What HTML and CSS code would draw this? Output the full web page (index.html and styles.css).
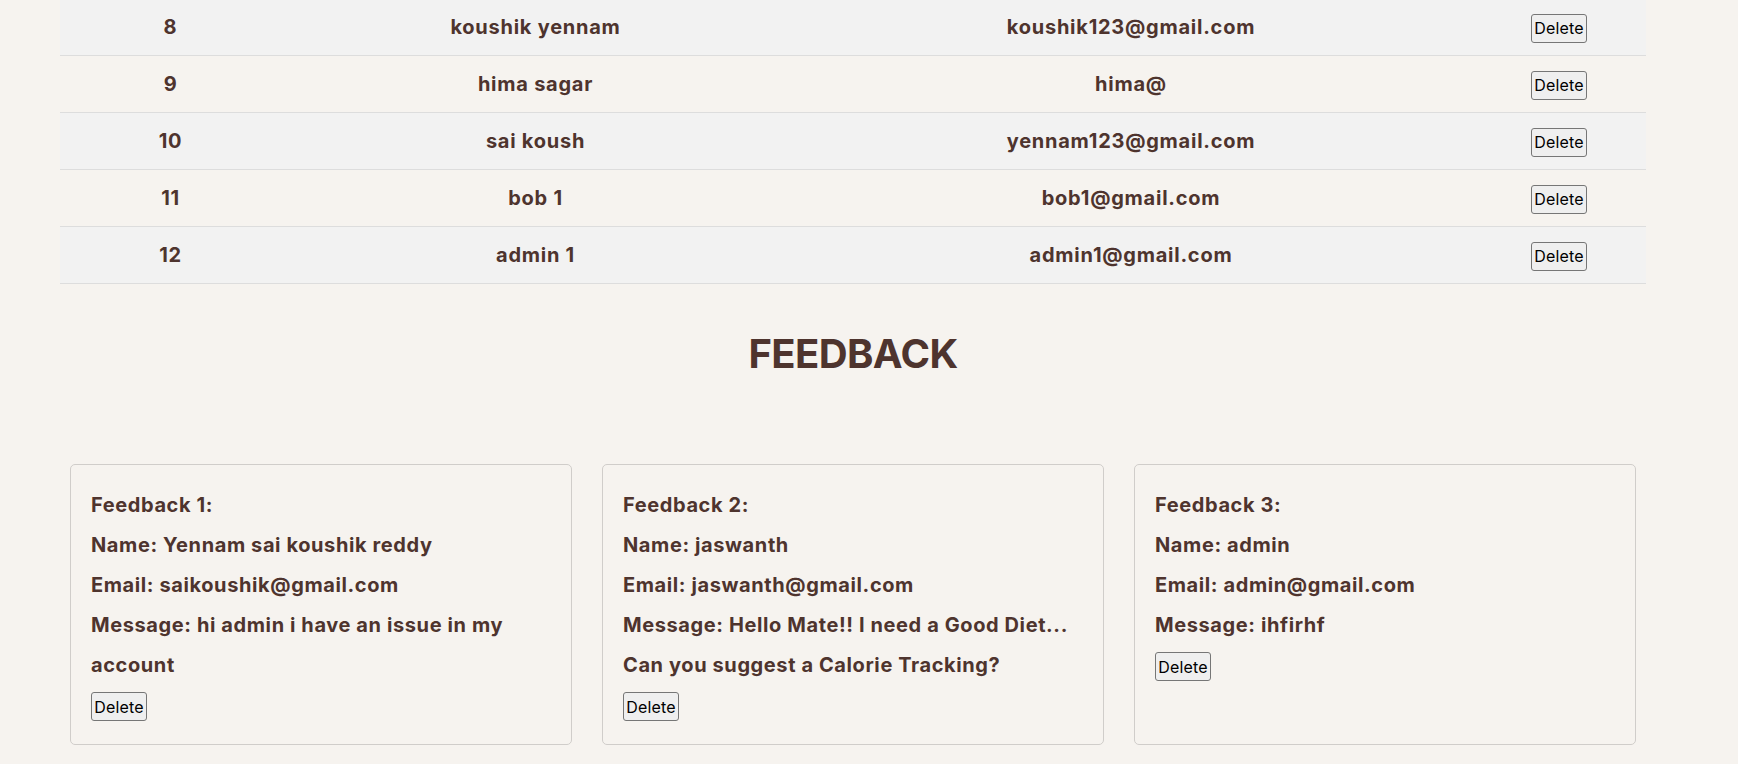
FILE: index.html
```html
<!DOCTYPE html>
<html lang="en">
<head>
<meta charset="utf-8">
<title>Admin - Users and Feedback</title>
<link rel="stylesheet" href="styles.css">
</head>
<body>
<main class="page">
  <table class="users">
    <colgroup>
      <col class="col-id">
      <col class="col-name">
      <col class="col-email">
      <col class="col-action">
    </colgroup>
    <tbody>
      <tr class="row-alt"><td>8</td><td>koushik yennam</td><td>koushik123@gmail.com</td><td><button class="btn">Delete</button></td></tr>
      <tr><td>9</td><td>hima sagar</td><td>hima@</td><td><button class="btn">Delete</button></td></tr>
      <tr class="row-alt"><td>10</td><td>sai koush</td><td>yennam123@gmail.com</td><td><button class="btn">Delete</button></td></tr>
      <tr><td>11</td><td>bob 1</td><td>bob1@gmail.com</td><td><button class="btn">Delete</button></td></tr>
      <tr class="row-alt"><td>12</td><td>admin 1</td><td>admin1@gmail.com</td><td><button class="btn">Delete</button></td></tr>
    </tbody>
  </table>

  <h2 class="section-title">FEEDBACK</h2>

  <section class="feedback-grid">
    <div class="card">
      <p>Feedback 1:</p>
      <p>Name: Yennam sai koushik reddy</p>
      <p>Email: saikoushik@gmail.com</p>
      <p>Message: hi admin i have an issue in my account</p>
      <button class="btn btn-card">Delete</button>
    </div>
    <div class="card">
      <p>Feedback 2:</p>
      <p>Name: jaswanth</p>
      <p>Email: jaswanth@gmail.com</p>
      <p>Message: Hello Mate!! I need a Good Diet... Can you suggest a Calorie Tracking?</p>
      <button class="btn btn-card">Delete</button>
    </div>
    <div class="card">
      <p>Feedback 3:</p>
      <p>Name: admin</p>
      <p>Email: admin@gmail.com</p>
      <p>Message: ihfirhf</p>
      <button class="btn btn-card">Delete</button>
    </div>
  </section>
</main>
</body>
</html>
```

FILE: styles.css
```css
html, body {
  margin: 0;
  padding: 0;
}

body {
  background: #f6f3ef;
  color: #4e342e;
  font-family: Inter, "Liberation Sans", sans-serif;
  overflow: hidden;
}

.page {
  width: 1586px;
  margin-left: 60px;
}

.users {
  width: 1586px;
  border-collapse: collapse;
  table-layout: fixed;
  margin-top: -1px;
}

.col-id { width: 221px; }
.col-name { width: 509px; }
.col-email { width: 682px; }
.col-action { width: 174px; }

.users td {
  height: 56px;
  padding: 0;
  text-align: center;
  vertical-align: middle;
  font-size: 20px;
  font-weight: 700;
  letter-spacing: 0.75px;
  border-bottom: 1px solid #dddddd;
}

.row-alt {
  background: #f2f2f2;
}

.btn {
  display: inline-block;
  box-sizing: border-box;
  width: 56px;
  height: 29px;
  padding: 0;
  margin: 0;
  font-family: Inter, "Liberation Sans", sans-serif;
  font-size: 16px;
  font-weight: 400;
  letter-spacing: 0.2px;
  color: #000000;
  background: #efefef;
  border: 1px solid #767676;
  border-radius: 3px;
  vertical-align: middle;
  text-align: center;
}

.users .btn {
  margin-top: 2px;
}

.section-title {
  margin: 46px 0 86px;
  font-size: 40px;
  line-height: 48px;
  font-weight: 700;
  text-align: center;
  letter-spacing: -0.6px;
}

.feedback-grid {
  display: grid;
  grid-template-columns: repeat(3, 1fr);
  gap: 30px;
  padding: 0 10px;
}

.card {
  border: 1px solid #d0cdca;
  border-radius: 5px;
  padding: 20px;
}

.card p {
  margin: 0;
  font-size: 20px;
  line-height: 40px;
  font-weight: 700;
  letter-spacing: 0.6px;
}

.btn-card {
  display: block;
  margin: 7px 0 3px;
}
```
